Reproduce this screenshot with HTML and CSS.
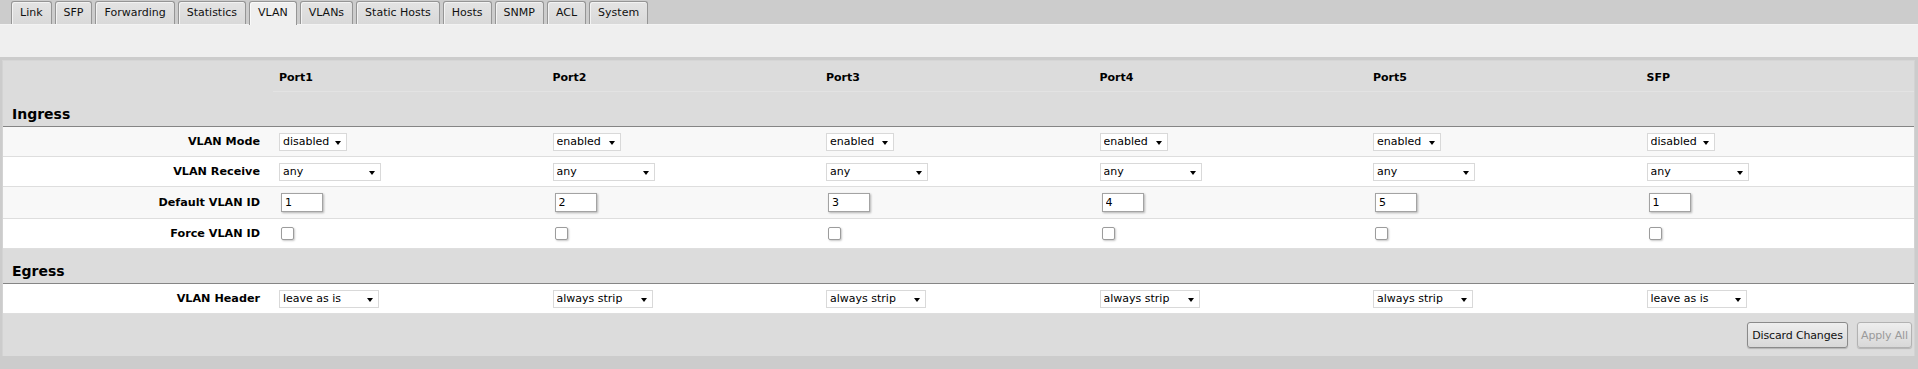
FILE: index.html
```html
<!DOCTYPE html>
<html>
<head>
<meta charset="utf-8">
<title>VLAN</title>
<link rel="stylesheet" href="styles.css">
</head>
<body>
<div class="tabbar">
  <span class="tab">Link</span>
  <span class="tab">SFP</span>
  <span class="tab">Forwarding</span>
  <span class="tab">Statistics</span>
  <span class="tab active">VLAN</span>
  <span class="tab">VLANs</span>
  <span class="tab">Static Hosts</span>
  <span class="tab">Hosts</span>
  <span class="tab">SNMP</span>
  <span class="tab">ACL</span>
  <span class="tab">System</span>
</div>
<div class="toolbar"></div>
<div class="panel">
  <div class="row head">
    <div></div>
    <div class="port">Port1</div>
    <div class="port">Port2</div>
    <div class="port">Port3</div>
    <div class="port">Port4</div>
    <div class="port">Port5</div>
    <div class="port">SFP</div>
  </div>
  <div class="section">Ingress</div>
  <div class="row data shade">
    <div class="label">VLAN Mode</div>
    <div class="cell"><span class="sel w-mode"><select><option>disabled</option></select></span></div>
    <div class="cell"><span class="sel w-mode"><select><option>enabled</option></select></span></div>
    <div class="cell"><span class="sel w-mode"><select><option>enabled</option></select></span></div>
    <div class="cell"><span class="sel w-mode"><select><option>enabled</option></select></span></div>
    <div class="cell"><span class="sel w-mode"><select><option>enabled</option></select></span></div>
    <div class="cell"><span class="sel w-mode"><select><option>disabled</option></select></span></div>
  </div>
  <div class="row data">
    <div class="label">VLAN Receive</div>
    <div class="cell"><span class="sel w-recv"><select><option>any</option></select></span></div>
    <div class="cell"><span class="sel w-recv"><select><option>any</option></select></span></div>
    <div class="cell"><span class="sel w-recv"><select><option>any</option></select></span></div>
    <div class="cell"><span class="sel w-recv"><select><option>any</option></select></span></div>
    <div class="cell"><span class="sel w-recv"><select><option>any</option></select></span></div>
    <div class="cell"><span class="sel w-recv"><select><option>any</option></select></span></div>
  </div>
  <div class="row data shade tall">
    <div class="label">Default VLAN ID</div>
    <div class="cell"><input class="num" type="text" value="1"></div>
    <div class="cell"><input class="num" type="text" value="2"></div>
    <div class="cell"><input class="num" type="text" value="3"></div>
    <div class="cell"><input class="num" type="text" value="4"></div>
    <div class="cell"><input class="num" type="text" value="5"></div>
    <div class="cell"><input class="num" type="text" value="1"></div>
  </div>
  <div class="row data">
    <div class="label">Force VLAN ID</div>
    <div class="cell"><input class="chk" type="checkbox"></div>
    <div class="cell"><input class="chk" type="checkbox"></div>
    <div class="cell"><input class="chk" type="checkbox"></div>
    <div class="cell"><input class="chk" type="checkbox"></div>
    <div class="cell"><input class="chk" type="checkbox"></div>
    <div class="cell"><input class="chk" type="checkbox"></div>
  </div>
  <div class="section">Egress</div>
  <div class="row data">
    <div class="label">VLAN Header</div>
    <div class="cell"><span class="sel w-head"><select><option>leave as is</option></select></span></div>
    <div class="cell"><span class="sel w-head"><select><option>always strip</option></select></span></div>
    <div class="cell"><span class="sel w-head"><select><option>always strip</option></select></span></div>
    <div class="cell"><span class="sel w-head"><select><option>always strip</option></select></span></div>
    <div class="cell"><span class="sel w-head"><select><option>always strip</option></select></span></div>
    <div class="cell"><span class="sel w-head"><select><option>leave as is</option></select></span></div>
  </div>
  <div class="actions">
    <button class="btn btn-discard">Discard Changes</button>
    <button class="btn btn-apply" disabled>Apply All</button>
  </div>
</div>
</body>
</html>
```

FILE: styles.css
```css
html, body {
  margin: 0;
  padding: 0;
}
body {
  background: #cccccc;
  font-family: "DejaVu Sans", Verdana, sans-serif;
  font-size: 11px;
  color: #000;
  height: 369px;
  overflow: hidden;
}

/* tabs */
.tabbar {
  height: 24px;
  display: flex;
  align-items: flex-end;
  padding-left: 11px;
  gap: 3px;
  box-sizing: border-box;
}
.tab {
  height: 23px;
  line-height: 22px;
  padding: 0 8px;
  border: 1px solid #959595;
  border-bottom: none;
  border-radius: 3px 3px 0 0;
  background: linear-gradient(#e4e4e4, #d9d9d9);
  box-shadow: inset 1px 1px 0 #f3f3f3;
  box-sizing: border-box;
  color: #111;
  white-space: nowrap;
  font-size: 11px;
}
.tab.active {
  background: #efefef;
  height: 24px;
  margin-bottom: -1px;
  box-shadow: inset 1px 1px 0 #fafafa;
  position: relative;
  z-index: 1;
}

.toolbar {
  height: 33px;
  background: #efefef;
  border-top: 1px solid #f3f3f3;
  box-sizing: border-box;
}

/* panel */
.panel {
  margin: 3px 3px 0 2px;
  background: #dcdcdc;
  height: 296px;
  border-left: 1px solid #d3d3d3;
  border-right: 1px solid #d3d3d3;
  border-top: 1px solid #d6d6d6;
  box-sizing: border-box;
}
.row {
  display: grid;
  grid-template-columns: 270px repeat(6, 1fr);
  box-sizing: border-box;
}
.head {
  height: 31px;
}
.head .port {
  font-weight: bold;
  padding-left: 6px;
  display: flex;
  align-items: center;
  padding-top: 2px;
  border-bottom: 1px solid #e3e3e3;
  box-sizing: border-box;
}
.section {
  height: 35px;
  box-sizing: border-box;
  border-bottom: 1px solid #858585;
  font-weight: bold;
  font-size: 14px;
  padding-left: 9px;
  display: flex;
  align-items: flex-end;
  padding-bottom: 4px;
}
.data {
  height: 30px;
  background: #ffffff;
  border-bottom: 1px solid #dedede;
}
.data.shade {
  background: #f8f8f8;
}
.data.tall {
  height: 32px;
}
.label {
  font-weight: bold;
  font-size: 11.2px;
  text-align: right;
  padding-right: 13px;
  display: flex;
  align-items: center;
  justify-content: flex-end;
}
.cell {
  padding-left: 6px;
  display: flex;
  align-items: center;
}

/* select */
.sel {
  position: relative;
  display: inline-block;
  height: 18px;
}
.sel select {
  -webkit-appearance: none;
  appearance: none;
  height: 18px;
  width: 100%;
  margin: 0;
  border: 1px solid #d9d9d9;
  border-radius: 0;
  background: #fff;
  font-family: "DejaVu Sans", Verdana, sans-serif;
  font-size: 11px;
  color: #000;
  padding: 0 0 0 3px;
  box-sizing: border-box;
  outline: none;
}
.sel::after {
  content: "";
  position: absolute;
  right: 6px;
  top: 8px;
  width: 0;
  height: 0;
  border-left: 3px solid transparent;
  border-right: 3px solid transparent;
  border-top: 4px solid #000;
  pointer-events: none;
}
.w-mode { width: 68px; }
.w-recv { width: 102px; }
.w-head { width: 100px; }

/* text input */
.num {
  width: 42px;
  height: 19px;
  margin: 0 0 0 2px;
  box-sizing: border-box;
  border: 1px solid #a3a3a3;
  background: #fff;
  box-shadow: 1px 1px 2px rgba(0, 0, 0, 0.28);
  font-family: "DejaVu Sans", Verdana, sans-serif;
  font-size: 11px;
  padding: 0 0 0 3px;
  color: #000;
  outline: none;
}

/* checkbox */
.chk {
  -webkit-appearance: none;
  appearance: none;
  width: 13px;
  height: 13px;
  margin: 0 0 0 2px;
  border: 1px solid #9c9c9c;
  border-radius: 2px;
  background: #fff;
  box-shadow: 1px 1px 2px rgba(0, 0, 0, 0.22);
  box-sizing: border-box;
}

/* buttons */
.actions {
  display: flex;
  justify-content: flex-end;
  gap: 9px;
  padding: 8px 2px 0 0;
}
.btn {
  height: 26px;
  box-sizing: border-box;
  border: 1px solid #8a8a8a;
  border-radius: 3px;
  background: linear-gradient(#eeeeee, #d8d8d8);
  box-shadow: 0 1px 1px rgba(0, 0, 0, 0.18);
  font-family: "DejaVu Sans", Verdana, sans-serif;
  font-size: 11px;
  color: #111;
  padding: 0;
  margin: 0;
}
.btn-discard { width: 101px; letter-spacing: -0.15px; }
.btn-apply {
  width: 55px;
  color: #9a9a9a;
  border-color: #b2b2b2;
  letter-spacing: -0.15px;
}
```
